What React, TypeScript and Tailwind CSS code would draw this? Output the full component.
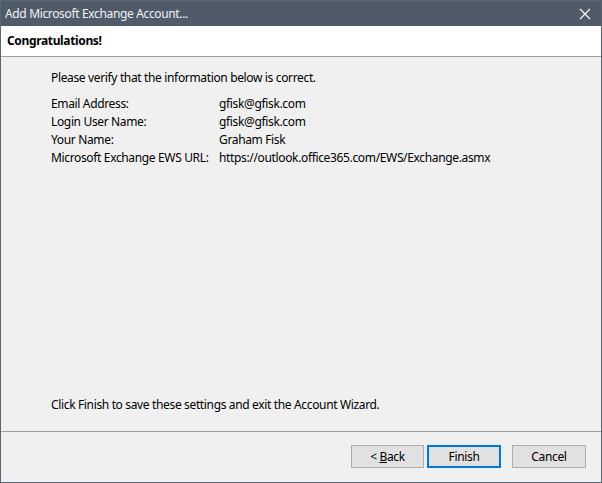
import React from "react";

const font = { fontFamily: '"Noto Sans", "Open Sans", sans-serif' };

export default function App() {
  const rows: [string, string][] = [
    ["Email Address:", "gfisk@gfisk.com"],
    ["Login User Name:", "gfisk@gfisk.com"],
    ["Your Name:", "Graham Fisk"],
    ["Microsoft Exchange EWS URL:", "https://outlook.office365.com/EWS/Exchange.asmx"],
  ];
  return (
    <div
      className="w-[602px] h-[483px] flex flex-col bg-[#f0f0f0] border border-[#5b6673] text-[12px] tracking-[-0.35px] text-black overflow-hidden"
      style={font}
    >
      <div className="h-[25px] shrink-0 bg-[#4f5b69] flex items-center justify-between pl-[4px] pr-[10px] text-white text-[12px]">
        <span className="text-[#f0f2f4]">Add Microsoft Exchange Account...</span>
        <svg width="12" height="12" viewBox="0 0 12 12">
          <path d="M1 1 L11 11 M11 1 L1 11" stroke="#f4f6f8" strokeWidth="1.2" />
        </svg>
      </div>
      <div className="h-[31px] shrink-0 bg-white flex items-center pl-[6px] font-bold border-b border-[#a0a0a0]">
        Congratulations!
      </div>
      <div className="flex-1 flex flex-col pl-[50px]">
        <div className="mt-[12px] leading-[18px]">Please verify that the information below is correct.</div>
        <div className="mt-[8px] flex flex-col">
          {rows.map(([k, v]) => (
            <div key={k} className="flex leading-[18px]">
              <span className="w-[168px] shrink-0">{k}</span>
              <span>{v}</span>
            </div>
          ))}
        </div>
        <div className="mt-auto mb-[17px] leading-[18px]">
          Click Finish to save these settings and exit the Account Wizard.
        </div>
      </div>
      <div className="h-[51px] shrink-0 border-t border-[#a0a0a0] flex items-start justify-end pt-[13px] pr-[15px]">
        <button className="w-[73px] h-[23px] bg-[#e1e1e1] border border-[#adadad] text-[12px] leading-none">
          &lt; <u>B</u>ack
        </button>
        <button className="ml-[3px] w-[74px] h-[23px] bg-[#e1e1e1] border-2 border-[#0078d7] text-[12px] leading-none">
          Finish
        </button>
        <button className="ml-[11px] w-[74px] h-[23px] bg-[#e1e1e1] border border-[#adadad] text-[12px] leading-none">
          Cancel
        </button>
      </div>
    </div>
  );
}
